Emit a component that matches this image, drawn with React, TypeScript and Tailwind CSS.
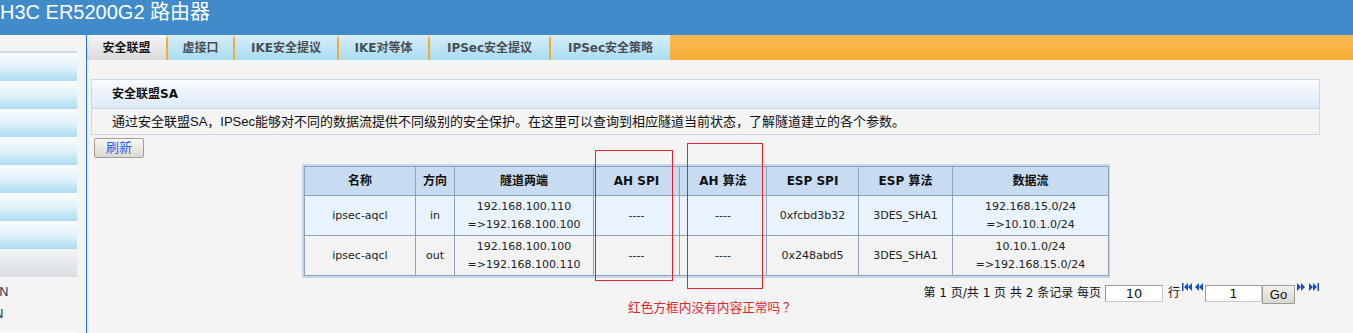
import React from "react";

const tabs = [
  { label: "安全联盟", w: "w-[79px]", active: true },
  { label: "虚接口", w: "w-[65px]" },
  { label: "IKE安全提议", w: "w-[102px]" },
  { label: "IKE对等体", w: "w-[89px]" },
  { label: "IPSec安全提议", w: "w-[119px]" },
  { label: "IPSec安全策略", w: "w-[119px]" },
];

const cols = [
  { label: "名称", w: "w-[111px]" },
  { label: "方向", w: "w-[39px]" },
  { label: "隧道两端", w: "w-[139px]" },
  { label: "AH SPI", w: "w-[86px]" },
  { label: "AH 算法", w: "w-[87px]" },
  { label: "ESP SPI", w: "w-[92px]" },
  { label: "ESP 算法", w: "w-[94px]" },
  { label: "数据流", w: "w-[156px]" },
];

const rows = [
  {
    bg: "bg-[#e9f3fd]",
    cells: ["ipsec-aqcl", "in", ["192.168.100.110", "=>192.168.100.100"], "----", "----", "0xfcbd3b32", "3DES_SHA1", ["192.168.15.0/24", "=>10.10.1.0/24"]],
  },
  {
    bg: "bg-[#f3f3f3]",
    cells: ["ipsec-aqcl", "out", ["192.168.100.100", "=>192.168.100.110"], "----", "----", "0x248abd5", "3DES_SHA1", ["10.10.1.0/24", "=>192.168.15.0/24"]],
  },
];

function Sep() {
  return (
    <div className="w-[2px] h-full bg-[#f3ac3a] flex flex-col">
      <div className="h-[3px] bg-[#fbd08a]" />
    </div>
  );
}

function PageIcon({ dir, bar }: { dir: "l" | "r"; bar?: boolean }) {
  const w = bar ? 10 : 8;
  return (
    <svg width={w} height="8" viewBox={`0 0 ${w} 8`} className="block">
      {dir === "l" ? (
        <g fill="#1a4fb0">
          {bar && <rect x="0" y="0" width="1.5" height="8" />}
          <polygon points={`${bar ? 2 : 0},4 ${bar ? 6 : 4},0 ${bar ? 6 : 4},8`} />
          <polygon points={`${bar ? 6 : 4},4 ${bar ? 10 : 8},0 ${bar ? 10 : 8},8`} />
        </g>
      ) : (
        <g fill="#1a4fb0">
          <polygon points="0,0 4,4 0,8" />
          <polygon points="4,0 8,4 4,8" />
          {bar && <rect x="8.5" y="0" width="1.5" height="8" />}
        </g>
      )}
    </svg>
  );
}

export default function App() {
  return (
    <div className="w-[1353px] h-[333px] overflow-hidden bg-[#f4f4f4] font-['DejaVu_Sans','Noto_Sans_CJK_SC',sans-serif] text-[12px] text-[#111]">
      <div className="h-[35px] bg-[#418bca] text-white text-[20px] leading-[24px] font-['Liberation_Sans','Noto_Sans_CJK_SC',sans-serif] whitespace-nowrap">
        H3C ER5200G2 路由器
      </div>
      <div className="flex h-[298px]">
        {/* sidebar */}
        <div className="w-[86px] shrink-0">
          <div className="w-[77px] pt-[16px]">
            <div className="h-[2px] bg-[#c8dcec]" />
            {Array.from({ length: 7 }).map((_, i) => (
              <div key={i} className="h-[28px] bg-gradient-to-b from-[#fafdff] via-[#dff2fa] to-[#aadcf1]" />
            ))}
            <div className="h-[28px] bg-gradient-to-b from-[#f2f4f6] via-[#e6e9ec] to-[#dadde1]" />
            <div className="overflow-hidden pt-[4px] text-[#3d4b5e] text-[13px] leading-[22px] whitespace-nowrap">
              <div className="ml-[-1px]">N</div>
              <div className="ml-[-6px]">N</div>
            </div>
            <div className="mt-[6px] h-[6px] bg-[#fbfbfb]" />
          </div>
        </div>
        <div className="w-[1px] shrink-0 bg-[#1a72f5]" />
        {/* main */}
        <div className="flex-1 flex flex-col">
          <div className="h-[25px] flex">
            {tabs.map((t, i) => (
              <React.Fragment key={t.label}>
                {i > 0 && <Sep />}
                <div
                  className={`${t.w} h-full flex items-center justify-center font-bold text-[12px] ${
                    t.active
                      ? "bg-gradient-to-b from-[#f6f6f6] to-[#dadada] text-[#1a1a1a]"
                      : "bg-gradient-to-b from-[#d6eef9] to-[#a9dcf1] text-[#4a4f55]"
                  } ${i === tabs.length - 1 ? "rounded-tr-[3px]" : ""}`}
                >
                  {t.label}
                </div>
              </React.Fragment>
            ))}
            <div className="flex-1 bg-gradient-to-b from-[#f8ba52] to-[#f7ad35]" />
          </div>

          <div className="relative pl-[4px] pr-[33px] pt-[19px]">
            <div className="border border-[#c6d8ea]">
              <div className="h-[29px] flex items-center pl-[20px] font-bold bg-gradient-to-b from-[#f9fbff] to-[#dde9f8] border-b border-[#c6d8ea]">
                安全联盟SA
              </div>
              <div className="h-[25px] flex items-center pl-[20px] text-[13px] whitespace-nowrap font-['Liberation_Sans','Noto_Sans_CJK_SC',sans-serif]">
                通过安全联盟SA，IPSec能够对不同的数据流提供不同级别的安全保护。在这里可以查询到相应隧道当前状态，了解隧道建立的各个参数。
              </div>
            </div>

            <button className="mt-[3px] ml-[3px] w-[50px] h-[20px] border border-[#a39f98] rounded-[2px] bg-gradient-to-b from-[#f7f6f3] to-[#dcd9d2] text-[#1565ee] text-[13px] leading-[18px]">
              刷新
            </button>

            <div className="mt-[6px] ml-[211px] w-[808px] border-2 border-[#c5d8eb]">
              <table className="table-fixed w-[804px] border-collapse text-center">
                <thead>
                  <tr className="bg-[#c7dcf0]">
                    {cols.map((c) => (
                      <th key={c.label} className={`${c.w} h-[29px] border border-[#8fa3b8] font-bold text-[12px] text-[#111]`}>
                        {c.label}
                      </th>
                    ))}
                  </tr>
                </thead>
                <tbody>
                  {rows.map((r, ri) => (
                    <tr key={ri} className={r.bg}>
                      {r.cells.map((c, ci) => (
                        <td key={ci} className="h-[40px] border border-[#8fa3b8] text-[11px] leading-[18px] text-[#222]">
                          {Array.isArray(c) ? (
                            <>
                              <div>{c[0]}</div>
                              <div>{c[1]}</div>
                            </>
                          ) : (
                            c
                          )}
                        </td>
                      ))}
                    </tr>
                  ))}
                </tbody>
              </table>
            </div>

            <div className="mt-[5px] flex justify-end items-start pr-[1px] whitespace-nowrap">
              <span className="mt-[3px] mr-[4px] leading-[14px]">第 1 页/共 1 页 共 2 条记录 每页</span>
              <div className="mt-[2px] w-[58px] h-[17px] bg-white border border-[#c8c8c8] border-t-[#9a9a9a] border-l-[#9a9a9a] text-center text-[13px] leading-[15px]">
                10
              </div>
              <span className="mt-[3px] ml-[5px] mr-[2px] leading-[14px]">行</span>
              <div className="flex gap-[3px] mt-0">
                <PageIcon dir="l" bar />
                <PageIcon dir="l" />
              </div>
              <div className="ml-[2px] mt-[2px] w-[57px] h-[17px] bg-white border border-[#c8c8c8] border-t-[#9a9a9a] border-l-[#9a9a9a] text-center text-[13px] leading-[15px]">
                1
              </div>
              <div className="mt-[2px] w-[33px] h-[19px] border border-[#a09c95] bg-gradient-to-b from-[#f3f2ee] to-[#d9d6cf] text-center text-[13px] leading-[17px] font-['Liberation_Sans',sans-serif]">
                Go
              </div>
              <div className="flex gap-[4px] ml-[2px]">
                <PageIcon dir="r" />
                <PageIcon dir="r" bar />
              </div>
            </div>

            {/* annotations */}
            <div className="absolute left-[508px] top-[90px] w-[78px] h-[131px] border border-[#e3232b]" />
            <div className="absolute left-[600px] top-[83px] w-[76px] h-[146px] border border-[#e3232b]" />
            <div className="absolute left-[541px] top-[239px] text-[#e3232b] text-[12.7px] leading-[16px] whitespace-nowrap font-['Noto_Sans_CJK_SC',sans-serif]">
              红色方框内没有内容正常吗 ？
            </div>
          </div>
        </div>
      </div>
    </div>
  );
}
